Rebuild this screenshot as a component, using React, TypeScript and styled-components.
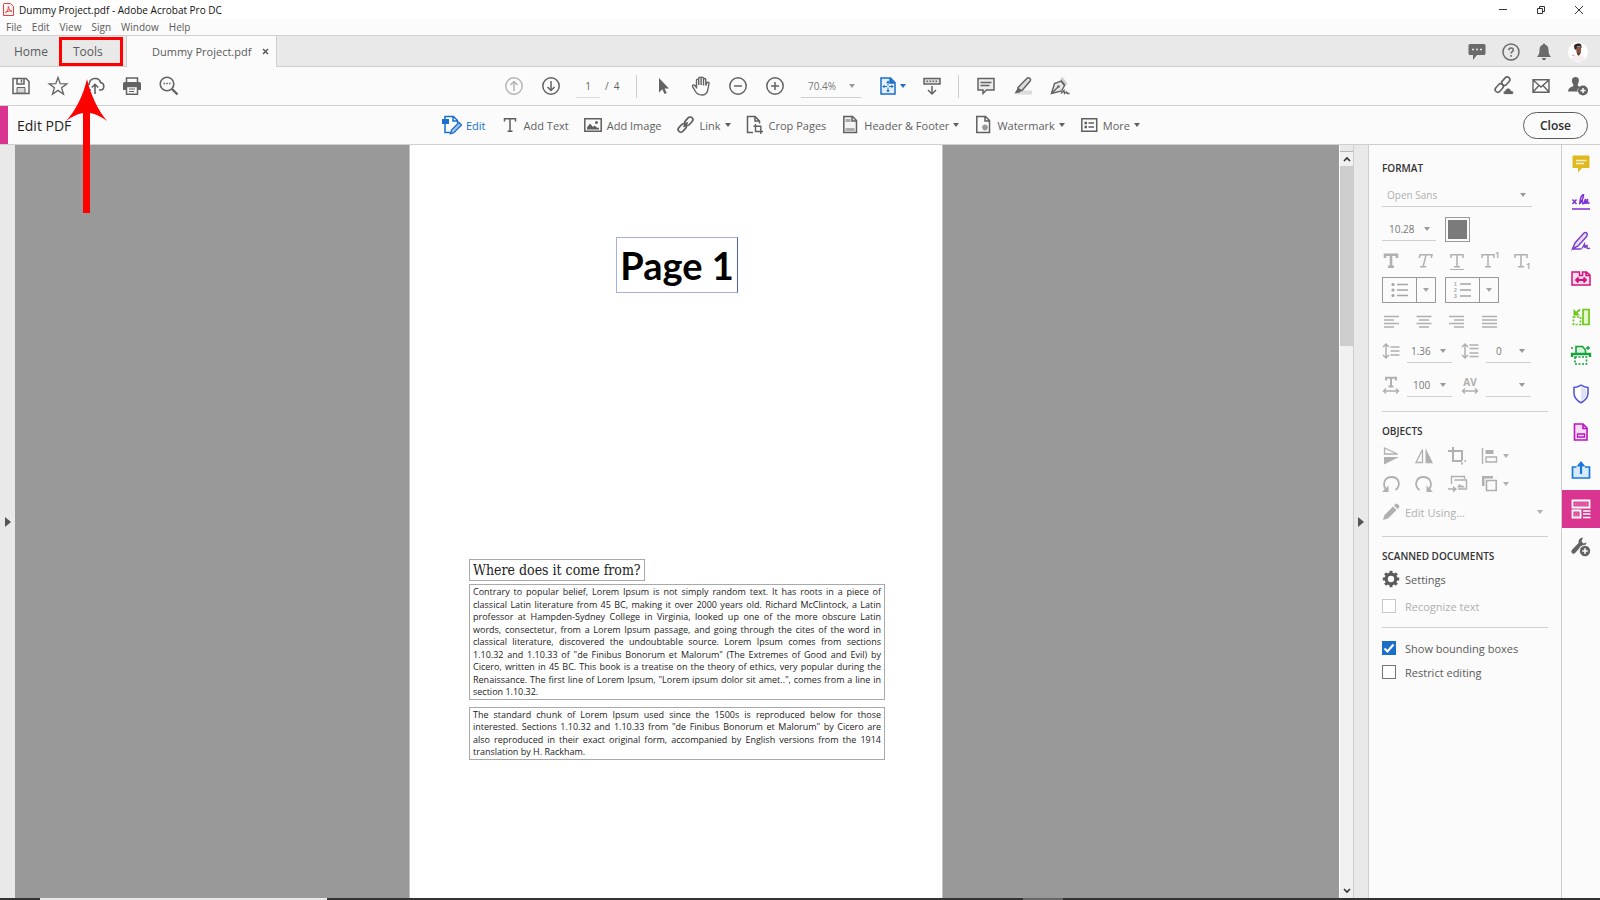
import React from "react";
import styled, { createGlobalStyle } from "styled-components";

const GlobalStyle = createGlobalStyle`
  *, *::before, *::after { box-sizing: border-box; }
  html, body { margin: 0; background: #fbfbfb; }
  body { font-family: "Open Sans", "Noto Sans", sans-serif; font-size: 11px; color: #4b4b4b; overflow: hidden; }
  button, select, input { font: inherit; color: inherit; }
  button { border: 0; padding: 0; background: none; cursor: pointer; }
  h1, h2, p { margin: 0; }
  svg { display: block; flex: none; overflow: visible; }
`;

/* ---------- frame ---------- */

const Window = styled.div`
  position: relative;
  display: flex;
  flex-direction: column;
  min-height: 100vh;
`;

const TitleBar = styled.header`
  display: flex;
  align-items: center;
  height: 19px;
  padding: 0 12px 0 3px;
  gap: 5px;
  background: #fff;
  color: #111;
  font-size: 10px;
`;

const TitleText = styled.span`
  flex: 1;
`;

const WindowButtons = styled.div`
  display: flex;
  gap: 20px;
  color: #333;
`;

const WindowButton = styled.button`
  display: grid;
  place-items: center;
  width: 18px;
  height: 18px;
`;

const MenuBar = styled.nav`
  display: flex;
  align-items: center;
  gap: 10px;
  height: 17px;
  padding: 0 6px;
  border-bottom: 1px solid #cfcfcf;
  background: #fbfbfb;
  font-size: 10px;
`;

const MenuItem = styled.button`
  line-height: 16px;
  color: #5a5a5a;
`;

const TabBar = styled.div`
  display: flex;
  align-items: stretch;
  height: 31px;
  background: #e9e9e9;
  box-shadow: inset 0 -1px #cfcfcf;
`;

const Tab = styled.button<{ $width: number }>`
  position: relative;
  width: ${(p) => p.$width}px;
  padding: 0 0 0 14px;
  text-align: left;
  font-size: 12px;
  color: #5a5a5a;
`;

const Highlight = styled.span`
  position: absolute;
  inset: 1px 3px 1px 0;
  border: 3px solid #fe0000;
  pointer-events: none;
`;

const DocumentTab = styled.div`
  display: flex;
  align-items: center;
  justify-content: space-between;
  width: 151px;
  padding: 0 7px 0 25px;
  border: solid #cfcfcf;
  border-width: 0 1px;
  background: #fbfbfb;
  font-size: 11px;
  color: #5a5a5a;
`;

const TabCorner = styled.div`
  display: flex;
  align-items: center;
  gap: 16px;
  margin-left: auto;
  padding-right: 12px;
  color: #6b6b6b;
`;

const ToolBar = styled.div`
  display: grid;
  grid-template-columns: 1fr auto 1fr;
  align-items: center;
  height: 39px;
  border-bottom: 1px solid #cfcfcf;
  background: #fbfbfb;
  color: #636363;
`;

const ToolGroup = styled.div<{ $end?: boolean; $before?: number; $after?: number }>`
  display: flex;
  align-items: center;
  justify-content: ${(p) => (p.$end ? "flex-end" : "flex-start")};
  padding-left: ${(p) => p.$before ?? 0}px;
  padding-right: ${(p) => p.$after ?? 0}px;
`;

const IconButton = styled.button<{ $muted?: boolean; $accent?: boolean }>`
  display: flex;
  align-items: center;
  justify-content: center;
  gap: 4px;
  width: ${(p) => (p.$accent ? 40 : 37)}px;
  height: 30px;
  color: ${(p) => (p.$muted ? "#b5b5b5" : p.$accent ? "#1a6fcb" : "inherit")};
`;

const Separator = styled.span`
  width: 1px;
  height: 23px;
  margin: 0 8px;
  background: #cfcfcf;
`;

const PageInput = styled.input`
  width: 24px;
  height: 24px;
  margin: 0 5px 0 7px;
  padding: 0;
  border: 0;
  border-bottom: 1px solid #dcdcdc;
  background: none;
  text-align: center;
  font-size: 10px;
`;

const PageTotal = styled.span`
  width: 23px;
  font-size: 10px;
  white-space: pre;
`;

const ZoomHolder = styled.span`
  display: flex;
  margin: 0 12px 0 8px;
`;

const EditBar = styled.div`
  display: grid;
  grid-template-columns: 1fr auto 1fr;
  align-items: center;
  height: 39px;
  border-bottom: 1px solid #cfcfcf;
  background: #fbfbfb;
`;

const EditTitle = styled.h1`
  align-self: stretch;
  display: flex;
  align-items: center;
  padding-left: 9px;
  border-left: 8px solid #d9348f;
  font-size: 14px;
  font-weight: 400;
  color: #222;
`;

const EditTools = styled.div`
  display: flex;
  gap: 14px;
  padding-right: 18px;
`;

const EditTool = styled.button<{ $active?: boolean }>`
  display: flex;
  align-items: center;
  gap: 4px;
  color: ${(p) => (p.$active ? "#1a6fcb" : "#5f5f5f")};
`;

const CloseButton = styled.button`
  width: 65px;
  height: 27px;
  margin-right: 12px;
  border: 1px solid #5c5c5c;
  border-radius: 14px;
  font-size: 12px;
  font-weight: 600;
  color: #2a2a2a;
`;

/* ---------- work area ---------- */

const Main = styled.main`
  flex: 1;
  display: flex;
  align-items: stretch;
`;

const Strip = styled.button<{ $edge?: boolean }>`
  display: grid;
  place-items: center;
  width: ${(p) => (p.$edge ? 16 : 15)}px;
  border: solid #cfcfcf;
  border-width: ${(p) => (p.$edge ? "0 1px" : "0")};
  background: #e9e9e9;
  color: #555;
`;

const Canvas = styled.section`
  flex: 1;
  display: flex;
  justify-content: center;
  padding-right: 2px;
  background: #999;
`;

const Page = styled.article`
  width: 534px;
  padding: 92px 57px 0 59px;
  border: solid #c4c4c4;
  border-width: 0 1px;
  background: #fff;
  color: #222;
`;

const PageTitle = styled.h2`
  width: fit-content;
  margin: 0 auto 266px;
  padding: 0 3px;
  border: 1px solid #a3b0de;
  border-right-color: #4a62b0;
  font: 700 38px/54px Lato, "Open Sans", sans-serif;
  color: #000;
`;

const SectionTitle = styled.h2`
  width: fit-content;
  margin-bottom: 3px;
  padding: 0 3px;
  border: 1px solid #a9a9a9;
  font: 400 14px/20px "DejaVu Serif Condensed", "DejaVu Serif", "Liberation Serif", serif;
  color: #222;
`;

const Paragraph = styled.p<{ $height: number }>`
  display: flex;
  flex-direction: column;
  justify-content: space-between;
  min-height: ${(p) => p.$height}px;
  margin-bottom: 7px;
  padding: 1px 3px;
  border: 1px solid #a9a9a9;
  font-size: 9px;
  line-height: 12px;
`;

const Line = styled.span`
  white-space: nowrap;
  text-align: justify;
  text-align-last: justify;
  &:last-child { text-align-last: left; }
`;

const ScrollBar = styled.div`
  display: flex;
  flex-direction: column;
  width: 14px;
  border-left: 1px solid #fff;
  background: #f0f0f0;
  color: #333;
`;

const SplitHandle = styled.span`
  height: 7px;
  border-bottom: 1px solid #b5b5b5;
  background: #e9e9e9;
`;

const ScrollButton = styled.button`
  display: grid;
  place-items: center;
  height: 14px;
`;

const Thumb = styled.span`
  height: 180px;
  background: #cdcdcd;
`;

const Spacer = styled.span`
  flex: 1;
`;

/* ---------- format panel ---------- */

const Panel = styled.aside`
  width: 192px;
  padding: 15px 13px 0;
  background: #fbfbfb;
`;

const PanelTitle = styled.h2`
  font-size: 10px;
  line-height: 16px;
  font-weight: 600;
  color: #333;
`;

const Rule = styled.hr<{ $before?: number; $after?: number }>`
  height: 1px;
  margin: ${(p) => p.$before ?? 0}px 0 ${(p) => p.$after ?? 11}px;
  border: 0;
  background: #d0d0d0;
`;

const PanelRow = styled.div<{ $height: number; $gap?: number; $after?: number }>`
  display: flex;
  align-items: center;
  gap: ${(p) => p.$gap ?? 0}px;
  height: ${(p) => p.$height}px;
  margin-bottom: ${(p) => p.$after ?? 0}px;
  color: #b0b0b0;
`;

const SelectBox = styled.span<{ $width: number; $dim?: boolean }>`
  display: inline-grid;
  align-items: center;
  width: ${(p) => p.$width}px;
  height: 24px;
  border-bottom: 1px solid #cfcfcf;
  color: ${(p) => (p.$dim ? "#b0b0b0" : "#777")};
  font-size: 10px;
  svg { grid-area: 1 / 1; justify-self: end; margin-right: 6px; pointer-events: none; color: #999; }
`;

const Select = styled.select<{ $inset: number }>`
  grid-area: 1 / 1;
  appearance: none;
  width: 100%;
  height: 22px;
  padding: 0 0 0 ${(p) => p.$inset}px;
  border: 0;
  background: none;
  color: inherit;
`;

const Swatch = styled.button`
  width: 25px;
  height: 25px;
  margin-left: 9px;
  padding: 2px;
  border: 1px solid #999;
  background: #7b7b7b content-box;
`;

const GlyphButton = styled.button<{ $width?: number }>`
  display: flex;
  align-items: center;
  gap: 4px;
  width: ${(p) => p.$width ?? 33}px;
  height: 22px;
  color: inherit;
`;

const SplitButton = styled.span`
  display: flex;
  height: 26px;
  border: 1px solid #999;
`;

const SplitPart = styled.button<{ $width: number }>`
  display: grid;
  place-items: center;
  width: ${(p) => p.$width}px;
  color: #a5a5a5;
  & + & { border-left: 1px solid #999; }
`;

const SpacedIcon = styled.span`
  margin-left: 2px;
`;

const PanelAction = styled.button<{ $dim?: boolean }>`
  display: flex;
  align-items: center;
  gap: 5px;
  width: 100%;
  padding-right: 5px;
  color: ${(p) => (p.$dim ? "#b0b0b0" : "#5a5a5a")};
  span { flex: 1; text-align: left; }
`;

const CheckLabel = styled.label<{ $dim?: boolean }>`
  display: flex;
  align-items: center;
  gap: 9px;
  height: 24px;
  color: ${(p) => (p.$dim ? "#b0b0b0" : "#5a5a5a")};
`;

const CheckBox = styled.input`
  appearance: none;
  width: 14px;
  height: 14px;
  margin: 0;
  border: 1px solid #757575;
  background: #fff;
  &:disabled { border-color: #c9c9c9; }
  &:checked {
    border-color: #1a6fcb;
    background: #1a6fcb;
  }
`;

const CheckHolder = styled.span`
  display: grid;
  place-items: center;
  color: #fff;
  > * { grid-area: 1 / 1; }
  svg { pointer-events: none; z-index: 1; }
`;

const Rail = styled.nav`
  width: 39px;
  border-left: 1px solid #cfcfcf;
  background: #fbfbfb;
`;

const RailList = styled.div`
  display: flex;
  flex-direction: column;
  justify-content: space-between;
  height: 421px;
`;

const RailButton = styled.button<{ $color: string; $active?: boolean }>`
  display: grid;
  place-items: center;
  width: 38px;
  height: 38px;
  color: ${(p) => p.$color};
  background: ${(p) => (p.$active ? "#d9348f" : "none")};
`;

const TaskBar = styled.footer`
  display: flex;
  height: 2px;
  background: #333;
`;

const TaskSegment = styled.span<{ $offset: number; $width: number; $color: string }>`
  width: ${(p) => p.$width}px;
  margin-left: ${(p) => p.$offset}px;
  background: ${(p) => p.$color};
`;

const Pointer = styled.svg`
  position: absolute;
  left: 65px;
  top: 79px;
  pointer-events: none;
`;

/* ---------- icons ---------- */

type IconProps = { w?: number; h?: number; sw?: number; children: React.ReactNode };
const Icon = ({ w = 20, h = 20, sw = 1.5, children }: IconProps) => (
  <svg width={w} height={h} viewBox={`0 0 ${w} ${h}`} fill="none" stroke="currentColor" strokeWidth={sw} aria-hidden="true">
    {children}
  </svg>
);
const fill = { fill: "currentColor", stroke: "none" };

const Caret = () => (
  <svg width="6" height="4" viewBox="0 0 6 4" aria-hidden="true"><path d="M0 0h6L3 4z" fill="currentColor" /></svg>
);

const AcrobatLogo = () => (
  <Icon w={11} h={13} sw={1}>
    <path d="M1 .5h6.5l3 3v9H.5V1z" fill="#fff3f3" stroke="#e8403d" />
    <path d="M2.500 9.500c2-1 3-3 2.800-6 .6 3 1.700 4.500 3.700 4.700-2.500-.5-4.500 0-6.500 1.300z" stroke="#e8403d" />
  </Icon>
);
const Minimize = () => <Icon w={10} h={10} sw={1}><path d="M1 4.500h8" /></Icon>;
const Restore = () => <Icon w={10} h={10} sw={1}><path d="M1.500 3.500h5v5h-5zM3.500 3.500v-2h5v5h-2" /></Icon>;
const Cross = () => <Icon w={10} h={10} sw={1}><path d="M1 1l8 8M9 1L1 9" /></Icon>;
const TabCross = () => <Icon w={7} h={7} sw={1.5}><path d="M1 1l5 5M6 1L1 6" /></Icon>;

const ChatIcon = () => (
  <Icon w={18} h={18}>
    <path d="M2 1h14q1.500 0 1.500 1.500v8q0 1.500-1.500 1.500H9l-4 5v-5H2Q.5 12 .5 10.500v-8Q.5 1 2 1z" {...fill} />
    <path d="M4 6.500h2M8 6.500h2M12 6.500h2" stroke="#e9e9e9" />
  </Icon>
);
const HelpIcon = () => (
  <Icon w={18} h={18}>
    <circle cx="9" cy="9" r="8" />
    <path d="M6.800 7.200c0-3 4.500-3 4.500-.3 0 1.800-2.200 1.800-2.200 3.700M9.100 12v1.700" />
  </Icon>
);
const BellIcon = () => (
  <Icon w={16} h={18}>
    <path d="M8 .5c.8 0 1.200.5 1.200 1.300 2.300.7 3.300 2.500 3.300 5 0 3.700.7 5.200 2.500 7.200H1c1.800-2 2.500-3.500 2.500-7.200 0-2.500 1-4.300 3.300-5C6.800 1 7.200.5 8 .5zM6 15h4c0 1.500-1 2.200-2 2.200S6 16.500 6 15z" {...fill} />
  </Icon>
);
const Avatar = () => (
  <svg width="20" height="20" viewBox="0 0 20 20" aria-hidden="true">
    <circle cx="10" cy="10" r="10" fill="#fff" />
    <path d="M3 17l4-4 3 1 3-1 4 3-3 3H6z" fill="#f4ecf0" />
    <path d="M8 5h5v5q-.5 3-2 3.500-2-.5-2.500-3z" fill="#8a5340" />
    <path d="M6 3.500Q8 1 11 1.500q3 0 2.500 5l-1-2H9L8 8 6.500 7z" fill="#2a2225" />
    <path d="M9 10.500l3 .500-1.500 3z" fill="#5a2f28" />
    <path d="M4 14l1.500-1.500M5.500 13.500h1" stroke="#e39ba3" />
  </svg>
);

const SaveIcon = () => (
  <Icon w={18} h={18}>
    <path d="M1 1.500h13l3 3v12H1z" />
    <path d="M5 2v5h7V2" /><path d="M9.500 2.500v3" />
    <path d="M5 10.500h8V16H5z" fill="#d5d5d5" strokeWidth="1" />
  </Icon>
);
const StarIcon = () => (
  <Icon w={20} h={20} sw={1.3}><path d="M10 1.500l2.200 6.200 6.700.1-5.300 4 1.900 6.400-5.500-3.800-5.500 3.800 1.900-6.400-5.300-4 6.700-.1z" /></Icon>
);
const CloudIcon = () => (
  <Icon w={20} h={20} sw={1.6}>
    <path d="M6 14H4.500C.2 13.500.5 8 4.300 8c.2-6.500 9.700-7.500 11.200-1.500 4.500.8 4.300 7.500 0 7.500H14M10 18V8.500M6.800 11.500L10 8.300l3.200 3.200" />
  </Icon>
);
const PrintIcon = () => (
  <Icon w={18} h={18}>
    <path d="M3.500 5V1h11v4" /><path d="M1.500 5h15q1.500 0 1.500 1.500V13h-3v-2H3v2H0V6.500Q0 5 1.500 5z" {...fill} />
    <path d="M3.500 9.500h11v7.700h-11z" fill="#fbfbfb" /><path d="M6 12h6M6 14.500h5" strokeWidth="1" />
  </Icon>
);
const FindIcon = () => (
  <Icon w={20} h={20} sw={1.6}>
    <circle cx="8" cy="8" r="6.800" /><path d="M13 13l5.500 5.500" strokeWidth="2.400" />
    <path d="M4.500 7.500h1.500M7.300 7.500h1.500M10 7.500h1.500" strokeWidth="1.400" />
  </Icon>
);
const Round = ({ d }: { d: string }) => (
  <Icon w={18} h={18}><circle cx="9" cy="9" r="8.200" /><path d={d} /></Icon>
);
const CursorIcon = () => <Icon w={12} h={18}><path d="M1 1v14.500l3.300-3.200L6.500 17l2.300-1-2.200-4.500H11z" {...fill} /></Icon>;
const HandIcon = () => (
  <Icon w={20} h={20} sw={1.4}>
    <path d="M5.500 12.500V4.500c0-1.800 2.200-1.800 2.200 0V9M7.700 9V2.500c0-1.900 2.400-1.900 2.400 0V9M10.100 9V2.500c0-1.900 2.400-1.900 2.400 0V9M12.500 9.500V3.800c0-1.800 2.300-1.800 2.300 0V9.500l1-2.500c.8-1.500 2.500-1 2.200.5-.5 2.500-.8 5-1.500 7.500-.9 2.800-2.500 4-5.500 4-3.500 0-5-1-6.500-3.500L1.700 10.800c-.8-1.500 1-2.500 2.200-1.300l1.600 2" />
  </Icon>
);
const FitIcon = () => (
  <Icon w={16} h={18}>
    <path d="M1 1h9.500L15 5.500V17H1z" fill="#e6f0fb" /><path d="M10 1.500V6h4.500" fill="#1a6fcb" />
    <path d="M8 5v9M3.500 9.500h9" strokeWidth="1" strokeDasharray="3.500 2" />
    <path d="M8 3.500L9.800 6H6.200zM8 15.500L9.800 13H6.200zM2.300 9.500L4.600 7.800v3.400zM13.700 9.500l-2.300-1.700v3.400z" {...fill} />
  </Icon>
);
const ScrollIcon = () => (
  <Icon w={18} h={18}>
    <path d="M1 1.500h16v5.500H1z" fill="#dcdcdc" /><path d="M3.500 4.200h11" strokeDasharray="1.500 1.500" />
    <path d="M9 9v7.500M5 13l4 4 4-4" />
  </Icon>
);
const CommentIcon = () => (
  <Icon w={18} h={18}>
    <path d="M1 1.500h16V13H9.500L6 16.500V13H1z" fill="#ececec" /><path d="M3.500 5.500h11M3.500 8.500h9" strokeWidth="1.300" />
  </Icon>
);
const HighlightIcon = () => (
  <Icon w={20} h={20}>
    <path d="M5 14.500h14v4H2z" fill="#dcdcdc" stroke="none" />
    <path d="M5 11.500L14 2.200c2-1.500 4.500.8 3.200 2.800L9 14.500c-2 0-4-1.200-4-3z" fill="#dcdcdc" />
    <path d="M5 11.500l4 3-2.500 2-5 1z" {...fill} />
  </Icon>
);
const SignIcon = () => (
  <Icon w={20} h={20} sw={1.4}>
    <path d="M1.500 17.500l3-10 6.500-2.500 3.500 4.500-3 5.500zM1.500 17.500L8 11" fill="#e8e8e8" /><circle cx="8.500" cy="10.500" r="1.300" {...fill} />
    <path d="M10 3l2.500-2 5 6.500-2 2.500z" fill="#d0d0d0" stroke="none" /><path d="M11 4.500l4 5" />
    <path d="M11 17.500l3-3 .5 3 2-1.500 1 1.500h2" />
  </Icon>
);
const LinkShape = () => (
  <>
    <rect x="-4.700" y="-2.700" width="9.400" height="5.400" rx="2.700" transform="translate(12.800 6.200) rotate(-48)" />
    <rect x="-4.700" y="-2.700" width="9.400" height="5.400" rx="2.700" transform="translate(6.200 13) rotate(-48)" />
  </>
);
const LinkIcon = () => <Icon w={20} h={20} sw={1.7}><LinkShape /><path d="M7.500 11.800l4.200-4.500" /></Icon>;
const ShareLinkIcon = () => (
  <Icon w={20} h={20} sw={1.6}>
    <g transform="translate(-1 -1)"><LinkShape /></g>
    <path d="M11 18.500q-2.500-.3-1.800-2.700.5-1 1.800-1 .8-3 3.300-2.800 2.200.2 2.700 2.500 2.700 0 2.700 2.200 0 1.800-1.800 1.800z" fill="currentColor" stroke="#fbfbfb" strokeWidth=".8" />
  </Icon>
);
const MailIcon = () => (
  <Icon w={18} h={14} sw={1.4}><path d="M1 .8h16v12.400H1zM1 1l8 7 8-7M1 13l6-6.500M17 13l-6-6.500" /></Icon>
);
const AddUserIcon = () => (
  <Icon w={20} h={20}>
    <path d="M7.500 1c4 0 4.200 4.500 2.200 7.500 0 1.500 1 2 2.800 2.500Q8 13 10 15.500H0q0-4 5.300-5.200V8.500C3 5.500 3.500 1 7.500 1z" {...fill} />
    <circle cx="15" cy="14.500" r="5" {...fill} /><path d="M15 12v5M12.500 14.500h5" stroke="#fbfbfb" />
  </Icon>
);

const EditIcon = () => (
  <Icon w={20} h={20}>
    <path d="M0 4h7v5H0z" {...fill} /><path d="M3 4V1.500h8.500l4 4V8M3 9v8.500h5.500M11 1.500V6h4.500" />
    <path d="M8.500 18.800l1-3.800 7.500-7.500 2.500 2.500-7.700 7.700z" fill="#9cc4ef" strokeWidth="1.300" />
  </Icon>
);
const TextIcon = () => (
  <Icon w={20} h={20} sw={1.5}><path d="M4.500 6.500V3.700h11v2.800M10 3.700v12.600M7.500 16.300h5" /></Icon>
);
const ImageIcon = () => (
  <Icon w={20} h={20}>
    <path d="M1.800 3.800h16.400v12.400H1.800z" /><path d="M4 14.500v-2L7 8.500l3 3.500 1.500-1.500 3 2.500 1.500-.5v2z" {...fill} /><circle cx="13.500" cy="7.500" r="1.500" {...fill} />
  </Icon>
);
const CropPageIcon = () => (
  <Icon w={20} h={20}>
    <path d="M8 17.500H2.500v-16h7.500l4.500 4.500v2.500M10 1.500V6h4.500" />
    <path d="M10.500 9v7.500h7.500M8.500 11.200h7.300V19" strokeWidth="1.400" />
  </Icon>
);
const HeaderIcon = () => (
  <Icon w={20} h={20}>
    <path d="M3.800 1.500h8.700l4 4v12H3.800z" fill="#f2f2f2" /><path d="M5.500 4h5v3h-5zM5.500 13h9v3h-9z" fill="#aaa" stroke="none" /><path d="M12 1.500V6h4.500" />
  </Icon>
);
const WatermarkIcon = () => (
  <Icon w={20} h={20}>
    <path d="M3.800 1.500h8.700l4 4v12H3.800zM12 1.500V6h4.500" /><path d="M9 12.500h6M12 9.500v6M9.900 10.400l4.200 4.200M14.100 10.400l-4.200 4.200" stroke="#999" strokeWidth="1.600" />
  </Icon>
);
const MoreIcon = () => (
  <Icon w={20} h={20}>
    <path d="M2.800 3.800h14.900v12.400H2.800z" /><path d="M5.500 8h2.500M5.500 12h2.500" strokeWidth="2.400" /><path d="M9.500 8h5.500M9.500 12h5.500" />
  </Icon>
);

/* the serif T of the character style buttons */
const StemT = ({ bold, dx = 0 }: { bold?: boolean; dx?: number }) => (
  <path d={`M${3 + dx} 7V3.700h12V7M${9 + dx} 3.700v12M${6 + dx} 15.700h6`} strokeWidth={bold ? 2.6 : 1.5} />
);
const BulletIcon = () => (
  <Icon w={18} h={16} sw={1.4}>
    <path d="M6 2.500h11M6 8h11M6 13.500h11" /><circle cx="2" cy="2.500" r="1.600" {...fill} /><circle cx="2" cy="8" r="1.600" {...fill} /><circle cx="2" cy="13.500" r="1.600" {...fill} />
  </Icon>
);
const NumberIcon = () => (
  <Icon w={18} h={18} sw={1.4}>
    <path d="M6 3h11M6 9h11M6 15h11" />
    {["1", "2", "3"].map((n, i) => (
      <text key={n} x="0" y={5 + i * 6} fontSize="5" fontWeight="700" fontFamily="Liberation Sans, sans-serif" {...fill}>{n}</text>
    ))}
  </Icon>
);
const AlignIcon = ({ d }: { d: string }) => <Icon w={18} h={14} sw={1.4}><path d={d} /></Icon>;
const VArrow = () => <path d="M4 2.500v13M1 5l3-3 3 3M1 13l3 3 3-3" />;
const LineHeightIcon = () => <Icon w={18} h={18} sw={1.5}><VArrow /><path d="M8.500 5h9M8.500 9h9M8.500 13h9" /></Icon>;
const ParaSpaceIcon = () => <Icon w={18} h={18} sw={1.5}><VArrow /><path d="M8.500 3h9M8.500 6.500h9M8.500 11h9M8.500 14.500h9" /></Icon>;
const HArrow = () => <path d="M1.500 15h15M4 12.500L1.500 15 4 17.500M14 12.500l2.500 2.500-2.500 2.500" />;
const HScaleIcon = () => (
  <Icon w={18} h={18} sw={1.4}>
    <path d="M4 4.500V1.800h10v2.700M9 2v8.500M6.500 10.500h5" strokeWidth="2" /><HArrow />
  </Icon>
);
const KernIcon = () => (
  <Icon w={18} h={18} sw={1.4}>
    <text x="9" y="10" textAnchor="middle" fontSize="10" fontWeight="700" {...fill}>AV</text><HArrow />
  </Icon>
);

const FlipVIcon = () => <Icon w={18} h={20} sw={1.3}><path d="M2.500 2v6h13z" /><path d="M2 18.500v-7.500h15z" {...fill} /></Icon>;
const FlipHIcon = () => <Icon w={18} h={18} sw={1.3}><path d="M7.500 2.500v13H1z" /><path d="M10.500 1v15.200H18z" {...fill} /></Icon>;
const CropIcon = () => <Icon w={18} h={18} sw={2}><path d="M5 0v14h9M0 4h14v9.500M14 15.500v2M16.500 14h1.500" /></Icon>;
const AlignObjIcon = () => (
  <Icon w={18} h={18} sw={1.4}><path d="M1.500 1v16M5 10h10.500v5H5z" /><path d="M4.500 3h8v4h-8z" {...fill} /></Icon>
);
const RotateIcon = ({ flip }: { flip?: boolean }) => (
  <Icon w={18} h={18} sw={1.8}>
    <g transform={flip ? "translate(18 0) scale(-1 1)" : undefined}>
      <path d="M3.500 14C0 7.500 3.500 2 9.500 2c7.500 0 10 8.500 4 13" /><path d="M6.500 10.500v6.500H0z" {...fill} />
    </g>
  </Icon>
);
const ReplaceIcon = () => (
  <Icon w={20} h={18} sw={1.4}>
    <path d="M3.500 9V1.500h13V4M6.500 5h12v9H10M0 14h7" /><path d="M5 11l4 3-4 3.500z" {...fill} /><path d="M9 12.500l2.500-3.500 2 2 1-1 2.500 2.500z" {...fill} />
  </Icon>
);
const ArrangeIcon = () => (
  <Icon w={18} h={18} sw={1.6}><path d="M5.500 5.500h9.700v10H5.500z" /><path d="M1 11V1h11v2.500H3.500V11z" {...fill} /></Icon>
);
const PencilIcon = () => (
  <Icon w={18} h={18}><path d="M1 17l1.500-5L11 3.500 14.500 7 6 15.500zM12 2.500l1.500-1.500q1-.8 2 0l1.500 1.500q.8 1 0 2L15.500 6z" {...fill} /></Icon>
);
const GearIcon = () => (
  <Icon w={18} h={18}>
    <circle cx="9" cy="9" r="4.800" strokeWidth="3.200" />
    <g strokeWidth="3">{[0, 45, 90, 135, 180, 225, 270, 315].map((a) => <path key={a} d="M9 .8v3" transform={`rotate(${a} 9 9)`} />)}</g>
  </Icon>
);
const CheckIcon = () => <Icon w={12} h={12} sw={2.2}><path d="M1.500 6.500l3 3 6-7" /></Icon>;

const RailComment = () => (
  <Icon w={18} h={18}><path d="M1.500.5h15q1 0 1 1V12q0 1-1 1H10l-4 4.500V13H1.500q-1 0-1-1V1.500q0-1 1-1z" {...fill} /><path d="M4 5.500h10.500M4 8.500h8" stroke="#fbf3cc" /></Icon>
);
const RailSignX = () => (
  <Icon w={20} h={18} sw={1.5}>
    <path d="M1.500 6.500l4 4.500M5.500 6.500l-4 4.500M8 11c2-1 5-7 4.500-9.300-2.500 0-4 6-3.500 9.300.5-3 2.500-5 2.500-3s0 3.500 1.500 2.500L14.500 6l-.3 3.700q.3 1.300 1.300 0L16.500 6l0 3.700q.5 1.200 2 0M1 16h18" />
  </Icon>
);
const RailSign = () => (
  <Icon w={20} h={20} sw={1.5}>
    <path d="M1.500 18L4 12 13 2q2.500-1.500 3.200 1 .2 1.500-1 3L7 15zM1.500 18h9" fill="#eadff8" /><path d="M11 17.500l2.500-4.500.5 4q1-3 2-2.500v2.500q1.500 1 3 0" />
  </Icon>
);
const RailCombine = () => (
  <Icon w={20} h={18} sw={1.5}>
    <path d="M1 2h7.500v3.500h3V2h4L19 5v10H1zM15 2v3.500h4" fill="#fbdcec" /><path d="M5 10h10M7.500 7.500L5 10l2.500 2.500M12.500 7.500L15 10l-2.500 2.500" strokeWidth="1.800" />
  </Icon>
);
const RailOrganize = () => (
  <Icon w={18} h={18} sw={1.7}>
    <path d="M11 1.500h6v15h-6z" fill="#e3f6cd" /><path d="M1.500 9h7v7.500h-7z" strokeDasharray="2 1.500" /><path d="M8 1.500L3 6" /><path d="M1.500 1v6.500H8z" {...fill} />
  </Icon>
);
const RailScan = () => (
  <Icon w={20} h={20} sw={1.6}>
    <path d="M5 8V1.500h6.500L14.500 5v3" fill="#d6f3dd" /><path d="M1 12V9h18v3" strokeWidth="2.400" /><path d="M4 12h11.500v7H4z" strokeDasharray="2 1.500" />
    <path d="M0 3h2M17 1v4M15 3h4" strokeWidth="1.300" />
  </Icon>
);
const RailShield = () => (
  <Icon w={18} h={20} sw={1.6}><path d="M9 1.200Q12 3.500 16 3.500v6q-.5 6-7 9.300-6.500-3.300-7-9.300v-6Q6 3.500 9 1.200z" fill="#fff" /><path d="M9 3v14q4.800-3 5.300-7.500V5Q11.500 5 9 3z" fill="#dfe0fb" stroke="none" /></Icon>
);
const RailForm = () => (
  <Icon w={16} h={18} sw={1.6}><path d="M1.500 1h8.500l4 4v12H1.500z" fill="#f7dcf7" /><path d="M10 1v4.500h4" /><path d="M4.500 11h7v3h-7z" strokeWidth="1.300" /></Icon>
);
const RailExport = () => (
  <Icon w={20} h={18} sw={1.7}><path d="M5.500 6H1.500v11h17V6H14" fill="#d8e9fb" /><path d="M10 13V4" strokeWidth="2.200" /><path d="M10 0l4.500 5.500h-9z" {...fill} /></Icon>
);
const RailEdit = () => (
  <Icon w={20} h={20} sw={1.8}>
    <path d="M1.500 1.500h17v7h-17z" /><path d="M4 4h12v2H4z" stroke="#f4a9d0" strokeWidth=".6" /><path d="M1.500 11.500h8v7h-8z" />
    <path d="M4 14h3v2.500H4z" stroke="#f4a9d0" strokeWidth=".6" /><path d="M12 12h7.500M12 15h7.500M12 18.500h7.500" strokeWidth="1.400" />
  </Icon>
);
const RailTools = () => (
  <Icon w={20} h={20}>
    <path d="M12 .5q-5 .5-4.500 5.500L.8 13q-1.300 2 .3 3.300 1.600 1.200 3-.3l5.500-6q5 0 6-4.500L12.500 6.500l-2-2z" {...fill} />
    <circle cx="14" cy="14" r="6.300" fill="#fbfbfb" stroke="none" /><circle cx="14" cy="14" r="5.200" {...fill} /><path d="M14 11.200v5.600M11.200 14h5.600" stroke="#fbfbfb" strokeWidth="1.700" />
  </Icon>
);

/* ---------- data ---------- */

const menus = ["File", "Edit", "View", "Sign", "Window", "Help"];

const editTools = [
  { label: "Edit", icon: <EditIcon />, active: true },
  { label: "Add Text", icon: <TextIcon /> },
  { label: "Add Image", icon: <ImageIcon /> },
  { label: "Link", icon: <LinkIcon />, caret: true },
  { label: "Crop Pages", icon: <CropPageIcon /> },
  { label: "Header & Footer", icon: <HeaderIcon />, caret: true },
  { label: "Watermark", icon: <WatermarkIcon />, caret: true },
  { label: "More", icon: <MoreIcon />, caret: true },
];

const originLines = [
  "Contrary to popular belief, Lorem Ipsum is not simply random text. It has roots in a piece of",
  "classical Latin literature from 45 BC, making it over 2000 years old. Richard McClintock, a Latin",
  "professor at Hampden-Sydney College in Virginia, looked up one of the more obscure Latin",
  "words, consectetur, from a Lorem Ipsum passage, and going through the cites of the word in",
  "classical literature, discovered the undoubtable source. Lorem Ipsum comes from sections",
  "1.10.32 and 1.10.33 of \"de Finibus Bonorum et Malorum\" (The Extremes of Good and Evil) by",
  "Cicero, written in 45 BC. This book is a treatise on the theory of ethics, very popular during the",
  "Renaissance. The first line of Lorem Ipsum, \"Lorem ipsum dolor sit amet..\", comes from a line in",
  "section 1.10.32.",
];

const chunkLines = [
  "The standard chunk of Lorem Ipsum used since the 1500s is reproduced below for those",
  "interested. Sections 1.10.32 and 1.10.33 from \"de Finibus Bonorum et Malorum\" by Cicero are",
  "also reproduced in their exact original form, accompanied by English versions from the 1914",
  "translation by H. Rackham.",
];

const railTools = [
  { label: "Comment", icon: <RailComment />, color: "#dfb91f" },
  { label: "Fill & Sign", icon: <RailSignX />, color: "#7d2fd0" },
  { label: "Request Signatures", icon: <RailSign />, color: "#7d3fc8" },
  { label: "Combine Files", icon: <RailCombine />, color: "#d3127c" },
  { label: "Organize Pages", icon: <RailOrganize />, color: "#6cc618" },
  { label: "Scan & OCR", icon: <RailScan />, color: "#15a33a" },
  { label: "Protect", icon: <RailShield />, color: "#5558e0" },
  { label: "Prepare Form", icon: <RailForm />, color: "#b916bd" },
  { label: "Export PDF", icon: <RailExport />, color: "#1678dc" },
  { label: "Edit PDF", icon: <RailEdit />, color: "#ffffff", active: true },
  { label: "More Tools", icon: <RailTools />, color: "#636363" },
];

type DropProps = { label: string; value: string; width: number; inset: number; dim?: boolean };
const Drop = ({ label, value, width, inset, dim }: DropProps) => (
  <SelectBox $width={width} $dim={dim}>
    <Select aria-label={label} $inset={inset} defaultValue={value}>
      <option value={value}>{value}</option>
    </Select>
    <Caret />
  </SelectBox>
);

export default function App() {
  return (
    <Window>
      <GlobalStyle />
      <TitleBar>
        <AcrobatLogo />
        <TitleText>Dummy Project.pdf - Adobe Acrobat Pro DC</TitleText>
        <WindowButtons>
          <WindowButton aria-label="Minimize"><Minimize /></WindowButton>
          <WindowButton aria-label="Restore"><Restore /></WindowButton>
          <WindowButton aria-label="Close window"><Cross /></WindowButton>
        </WindowButtons>
      </TitleBar>
      <MenuBar>{menus.map((m) => <MenuItem key={m}>{m}</MenuItem>)}</MenuBar>
      <TabBar>
        <Tab $width={59}>Home</Tab>
        <Tab $width={67}>Tools<Highlight /></Tab>
        <DocumentTab>
          <span>Dummy Project.pdf</span>
          <button aria-label="Close tab"><TabCross /></button>
        </DocumentTab>
        <TabCorner>
          <button aria-label="Messages"><ChatIcon /></button>
          <button aria-label="Help"><HelpIcon /></button>
          <button aria-label="Notifications"><BellIcon /></button>
          <button aria-label="Account"><Avatar /></button>
        </TabCorner>
      </TabBar>
      <ToolBar>
        <ToolGroup $before={2}>
          <IconButton aria-label="Save"><SaveIcon /></IconButton>
          <IconButton aria-label="Star"><StarIcon /></IconButton>
          <IconButton aria-label="Upload"><CloudIcon /></IconButton>
          <IconButton aria-label="Print"><PrintIcon /></IconButton>
          <IconButton aria-label="Find"><FindIcon /></IconButton>
        </ToolGroup>
        <ToolGroup $after={27}>
          <IconButton aria-label="Previous page" $muted><Round d="M9 14V4.500M5.500 8L9 4.500 12.500 8" /></IconButton>
          <IconButton aria-label="Next page"><Round d="M9 4v9.500M5.500 10L9 13.500l3.500-3.500" /></IconButton>
          <PageInput aria-label="Page number" defaultValue="1" />
          <PageTotal>{"/  4"}</PageTotal>
          <Separator />
          <IconButton aria-label="Select"><CursorIcon /></IconButton>
          <IconButton aria-label="Hand"><HandIcon /></IconButton>
          <IconButton aria-label="Zoom out"><Round d="M5 9h8" /></IconButton>
          <IconButton aria-label="Zoom in"><Round d="M5 9h8M9 5v8" /></IconButton>
          <ZoomHolder><Drop label="Zoom" value="70.4%" width={60} inset={7} /></ZoomHolder>
          <IconButton aria-label="Fit page" $accent><FitIcon /><Caret /></IconButton>
          <IconButton aria-label="Scrolling mode"><ScrollIcon /></IconButton>
          <Separator />
          <IconButton aria-label="Add comment"><CommentIcon /></IconButton>
          <IconButton aria-label="Highlight"><HighlightIcon /></IconButton>
          <IconButton aria-label="Draw signature"><SignIcon /></IconButton>
        </ToolGroup>
        <ToolGroup $end $after={4}>
          <IconButton aria-label="Share link"><ShareLinkIcon /></IconButton>
          <IconButton aria-label="Send by email"><MailIcon /></IconButton>
          <IconButton aria-label="Add people"><AddUserIcon /></IconButton>
        </ToolGroup>
      </ToolBar>
      <EditBar>
        <EditTitle>Edit PDF</EditTitle>
        <EditTools>
          {editTools.map((t) => (
            <EditTool key={t.label} $active={t.active}>{t.icon}{t.label}{t.caret && <Caret />}</EditTool>
          ))}
        </EditTools>
        <ToolGroup $end><CloseButton>Close</CloseButton></ToolGroup>
      </EditBar>
      <Main>
        <Strip aria-label="Show navigation pane"><Icon w={6} h={10}><path d="M0 0l6 5-6 5z" {...fill} /></Icon></Strip>
        <Canvas>
          <Page>
            <PageTitle>Page 1</PageTitle>
            <SectionTitle>Where does it come from?</SectionTitle>
            <Paragraph $height={116}>{originLines.map((l) => <Line key={l}>{l} </Line>)}</Paragraph>
            <Paragraph $height={53}>{chunkLines.map((l) => <Line key={l}>{l} </Line>)}</Paragraph>
          </Page>
        </Canvas>
        <ScrollBar>
          <SplitHandle />
          <ScrollButton aria-label="Scroll up"><Icon w={8} h={6} sw={1.6}><path d="M1 5l3-3 3 3" /></Icon></ScrollButton>
          <Thumb />
          <Spacer />
          <ScrollButton aria-label="Scroll down"><Icon w={8} h={6} sw={1.6}><path d="M1 1l3 3 3-3" /></Icon></ScrollButton>
        </ScrollBar>
        <Strip $edge aria-label="Hide tools pane"><Icon w={6} h={10}><path d="M0 0l6 5-6 5z" {...fill} /></Icon></Strip>
        <Panel>
          <PanelTitle>FORMAT</PanelTitle>
          <PanelRow $height={38}><Drop label="Font" value="Open Sans" width={150} inset={5} dim /></PanelRow>
          <PanelRow $height={30} $after={6}>
            <Drop label="Font size" value="10.28" width={54} inset={7} />
            <Swatch aria-label="Font color" />
          </PanelRow>
          <PanelRow $height={22} $after={5}>
            <GlyphButton aria-label="Bold"><Icon w={18}><StemT bold /></Icon></GlyphButton>
            <GlyphButton aria-label="Italic"><Icon w={18}><g transform="translate(3 0) skewX(-14)"><StemT /></g></Icon></GlyphButton>
            <GlyphButton aria-label="Underline"><Icon w={18}><StemT /><path d="M2 18.500h14" strokeWidth="1" /></Icon></GlyphButton>
            <GlyphButton aria-label="Superscript">
              <Icon w={18}><StemT dx={-2} /><text x="14" y="7" fontSize="8" fontWeight="700" {...fill}>1</text></Icon>
            </GlyphButton>
            <GlyphButton aria-label="Subscript">
              <Icon w={18}><StemT dx={-2} /><text x="12" y="18" fontSize="8" fontWeight="700" {...fill}>1</text></Icon>
            </GlyphButton>
          </PanelRow>
          <PanelRow $height={26} $gap={9} $after={8}>
            <SplitButton>
              <SplitPart $width={33} aria-label="Bulleted list"><BulletIcon /></SplitPart>
              <SplitPart $width={19} aria-label="Bullet styles"><Caret /></SplitPart>
            </SplitButton>
            <SplitButton>
              <SplitPart $width={33} aria-label="Numbered list"><NumberIcon /></SplitPart>
              <SplitPart $width={19} aria-label="Number styles"><Caret /></SplitPart>
            </SplitButton>
          </PanelRow>
          <PanelRow $height={22} $after={6}>
            <GlyphButton aria-label="Align left"><AlignIcon d="M2 1.500h15M2 5h10M2 8.500h15M2 12h10" /></GlyphButton>
            <GlyphButton aria-label="Align center"><AlignIcon d="M1.500 1.500h15M4 5h10M1.500 8.500h15M4 12h10" /></GlyphButton>
            <GlyphButton aria-label="Align right"><AlignIcon d="M1 1.500h15M6 5h10M1 8.500h15M6 12h10" /></GlyphButton>
            <GlyphButton aria-label="Justify"><AlignIcon d="M1 1.500h15M1 5h15M1 8.500h15M1 12h15" /></GlyphButton>
          </PanelRow>
          <PanelRow $height={24} $gap={7} $after={10}>
            <LineHeightIcon /><Drop label="Line spacing" value="1.36" width={45} inset={4} />
            <SpacedIcon><ParaSpaceIcon /></SpacedIcon><Drop label="Paragraph spacing" value="0" width={45} inset={10} />
          </PanelRow>
          <PanelRow $height={24} $gap={7} $after={14}>
            <HScaleIcon /><Drop label="Horizontal scaling" value="100" width={45} inset={6} />
            <SpacedIcon><KernIcon /></SpacedIcon><Drop label="Character spacing" value="" width={45} inset={6} />
          </PanelRow>
          <Rule />
          <PanelTitle>OBJECTS</PanelTitle>
          <PanelRow $height={33}>
            <GlyphButton aria-label="Flip vertical"><FlipVIcon /></GlyphButton>
            <GlyphButton aria-label="Flip horizontal"><FlipHIcon /></GlyphButton>
            <GlyphButton aria-label="Crop"><CropIcon /></GlyphButton>
            <GlyphButton aria-label="Align objects"><AlignObjIcon /><Caret /></GlyphButton>
          </PanelRow>
          <PanelRow $height={24} $after={6}>
            <GlyphButton aria-label="Rotate left"><RotateIcon /></GlyphButton>
            <GlyphButton aria-label="Rotate right"><RotateIcon flip /></GlyphButton>
            <GlyphButton aria-label="Replace image"><ReplaceIcon /></GlyphButton>
            <GlyphButton aria-label="Arrange"><ArrangeIcon /><Caret /></GlyphButton>
          </PanelRow>
          <PanelRow $height={20} $after={14}><PanelAction $dim><PencilIcon /><span>Edit Using...</span><Caret /></PanelAction></PanelRow>
          <Rule />
          <PanelTitle>SCANNED DOCUMENTS</PanelTitle>
          <PanelRow $height={30}><PanelAction><GearIcon /><span>Settings</span></PanelAction></PanelRow>
          <CheckLabel $dim><CheckBox type="checkbox" disabled />Recognize text</CheckLabel>
          <Rule $before={9} $after={8} />
          <CheckLabel>
            <CheckHolder><CheckBox type="checkbox" defaultChecked /><CheckIcon /></CheckHolder>Show bounding boxes
          </CheckLabel>
          <CheckLabel><CheckBox type="checkbox" />Restrict editing</CheckLabel>
        </Panel>
        <Rail>
          <RailList>
            {railTools.map((t) => (
              <RailButton key={t.label} aria-label={t.label} $color={t.color} $active={t.active}>{t.icon}</RailButton>
            ))}
          </RailList>
        </Rail>
      </Main>
      <TaskBar>
        <TaskSegment $offset={40} $width={287} $color="#e8e8e8" />
        <TaskSegment $offset={696} $width={40} $color="#666" />
      </TaskBar>
      <Pointer width="44" height="135" viewBox="0 0 44 135" aria-hidden="true">
        <path d="M22 0C26 17 33 31 42 42 37 38 31 35 25 34V134H18V34C12 35 6 38 1 42 11 31 18 17 22 0z" fill="#fe0000" />
      </Pointer>
    </Window>
  );
}
